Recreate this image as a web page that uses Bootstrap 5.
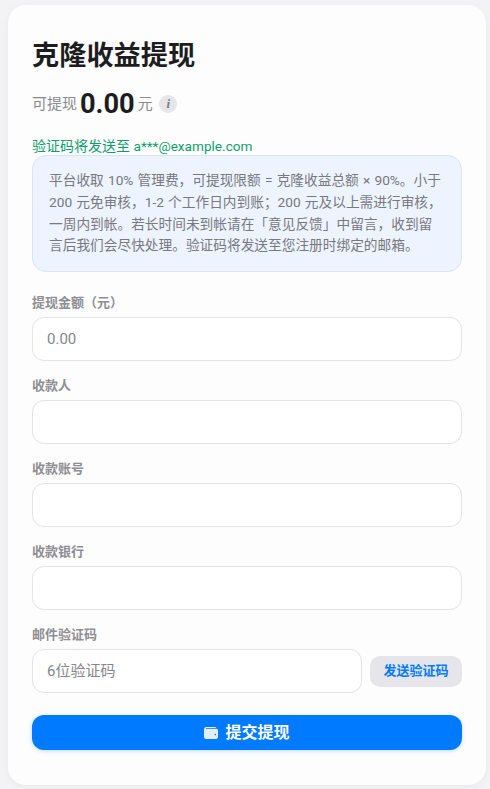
<!DOCTYPE html>
<html lang="zh-CN">
<head>
<meta charset="utf-8">
<title>克隆收益提现</title>
<link href="https://cdn.jsdelivr.net/npm/bootstrap@5.3.0/dist/css/bootstrap.min.css" rel="stylesheet">
<style>
html,body{height:100%;}
body{background:#f3f3f6;font-family:Roboto,"Noto Sans CJK SC",sans-serif;color:#1d1d1f;overflow:hidden;}
.wd-shell{padding:5px 4px 4px 8px;}
.wd-card{background:#fdfdfe;border-radius:18px;padding:24px;height:780px;box-shadow:0 2px 8px rgba(0,0,0,.04);}
.wd-title{font-size:27.2px;font-weight:700;line-height:54px;height:54px;margin:0 0 4px;color:#1d1d1f;}
.wd-balance{height:34px;gap:3px;color:#8a8a8f;font-size:15px;}
.wd-amount{font-size:27.2px;font-weight:700;color:#1d1d1f;line-height:34px;}
.wd-info{width:18px;height:18px;border-radius:50%;background:#e5e5ea;color:#7c7c80;font:italic 700 13px/18px "Liberation Serif",serif;text-align:center;margin-left:3.6px;}
.wd-mail{color:#0f9d6e;font-size:14px;line-height:18px;margin-top:16px;height:18px;}
.wd-mail-addr{font-size:13.6px;}
.wd-note{background:#edf4ff;border:1px solid #d5e5fa;border-radius:14px;padding:14px 16px;font-size:13.7px;line-height:21.76px;word-spacing:.8px;color:#78787d;height:117px;margin-bottom:22px;}
.wd-note p{margin:0;}
.wd-label{font-size:13px;font-weight:600;color:#8e8e93;line-height:17px;margin-bottom:6px;display:block;}
.wd-input{height:44px;border:1px solid #e3e3e8;border-radius:12px;font-size:15px;padding:0 14px;background:#fff;color:#1d1d1f;}
.wd-input::placeholder{color:#86868b;opacity:1;}
.wd-field{margin-bottom:16px;}
.wd-send{background:#e5e5ea;color:#007aff;border:0;border-radius:10px;font-size:13px;font-weight:600;height:31px;width:92px;padding:0;flex:none;white-space:nowrap;}
.wd-submit{background:#007aff;color:#fff;border:0;border-radius:12px;height:35px;width:100%;font-size:16px;font-weight:700;gap:7px;margin-top:22px;box-shadow:0 1px 4px rgba(0,122,255,.25);}
</style>
</head>
<body>
<div class="wd-shell">
  <main class="wd-card">
    <h1 class="wd-title">克隆收益提现</h1>
    <div class="wd-balance d-flex align-items-center">
      <span>可提现</span>
      <span class="wd-amount">0.00</span>
      <span>元</span>
      <span class="wd-info">i</span>
    </div>
    <div class="wd-mail">验证码将发送至 <span class="wd-mail-addr">a***@example.com</span></div>
    <div class="wd-note"><p>平台收取 10% 管理费，可提现限额 = 克隆收益总额 × 90%。小于 200 元免审核，1-2 个工作日内到账；200 元及以上需进行审核，一周内到帐。若长时间未到帐请在「意见反馈」中留言，收到留言后我们会尽快处理。验证码将发送至您注册时绑定的邮箱。</p></div>
    <form>
      <div class="wd-field">
        <label class="wd-label">提现金额（元）</label>
        <input class="form-control wd-input" placeholder="0.00">
      </div>
      <div class="wd-field">
        <label class="wd-label">收款人</label>
        <input class="form-control wd-input">
      </div>
      <div class="wd-field">
        <label class="wd-label">收款账号</label>
        <input class="form-control wd-input">
      </div>
      <div class="wd-field">
        <label class="wd-label">收款银行</label>
        <input class="form-control wd-input">
      </div>
      <div>
        <label class="wd-label">邮件验证码</label>
        <div class="d-flex align-items-center gap-2">
          <input class="form-control wd-input flex-grow-1" placeholder="6位验证码">
          <button type="button" class="btn wd-send">发送验证码</button>
        </div>
      </div>
      <button type="button" class="btn wd-submit d-flex align-items-center justify-content-center">
        <svg width="14" height="12" viewBox="0 0 14 12" aria-hidden="true"><path d="M2.5 0H11a1.5 1.5 0 0 1 1.4 1H2.2c-.5 0-.5.8 0 .8H12.5A1.5 1.5 0 0 1 14 3.3V10a2 2 0 0 1-2 2H2a2 2 0 0 1-2-2V2.5A2.5 2.5 0 0 1 2.5 0Z" fill="#e3efff"/><circle cx="11.3" cy="7.6" r=".8" fill="#007aff"/></svg>
        <span>提交提现</span>
      </button>
    </form>
  </main>
</div>
</body>
</html>
